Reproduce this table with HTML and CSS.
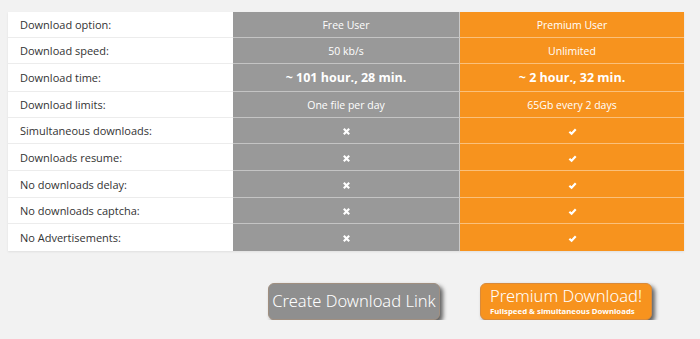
FILE: index.html
```html
<!DOCTYPE html>
<html lang="en">
<head>
    <meta charset="UTF-8">
    <meta name="viewport" content="width=device-width, initial-scale=1.0">
    <title>Download options</title>
    <link rel="stylesheet" href="styles.css">
</head>
<body>
    <div class="wrap">
        <table class="compare">
            <tr>
                <td class="label">Download option:</td>
                <td class="free">Free User</td>
                <td class="premium">Premium User</td>
            </tr>
            <tr>
                <td class="label">Download speed:</td>
                <td class="free">50 kb/s</td>
                <td class="premium">Unlimited</td>
            </tr>
            <tr class="big">
                <td class="label">Download time:</td>
                <td class="free">~ 101 hour., 28 min.</td>
                <td class="premium">~ 2 hour., 32 min.</td>
            </tr>
            <tr>
                <td class="label">Download limits:</td>
                <td class="free">One file per day</td>
                <td class="premium">65Gb every 2 days</td>
            </tr>
            <tr>
                <td class="label">Simultaneous downloads:</td>
                <td class="free"><svg class="icon" viewBox="0 0 10 10"><path d="M2 2 L8 8 M8 2 L2 8"/></svg></td>
                <td class="premium"><svg class="icon" viewBox="0 0 10 10"><path d="M1.5 5.2 L4 7.5 L8.6 2.5"/></svg></td>
            </tr>
            <tr class="tall">
                <td class="label">Downloads resume:</td>
                <td class="free"><svg class="icon" viewBox="0 0 10 10"><path d="M2 2 L8 8 M8 2 L2 8"/></svg></td>
                <td class="premium"><svg class="icon" viewBox="0 0 10 10"><path d="M1.5 5.2 L4 7.5 L8.6 2.5"/></svg></td>
            </tr>
            <tr class="tall">
                <td class="label">No downloads delay:</td>
                <td class="free"><svg class="icon" viewBox="0 0 10 10"><path d="M2 2 L8 8 M8 2 L2 8"/></svg></td>
                <td class="premium"><svg class="icon" viewBox="0 0 10 10"><path d="M1.5 5.2 L4 7.5 L8.6 2.5"/></svg></td>
            </tr>
            <tr>
                <td class="label">No downloads captcha:</td>
                <td class="free"><svg class="icon" viewBox="0 0 10 10"><path d="M2 2 L8 8 M8 2 L2 8"/></svg></td>
                <td class="premium"><svg class="icon" viewBox="0 0 10 10"><path d="M1.5 5.2 L4 7.5 L8.6 2.5"/></svg></td>
            </tr>
            <tr>
                <td class="label">No Advertisements:</td>
                <td class="free"><svg class="icon" viewBox="0 0 10 10"><path d="M2 2 L8 8 M8 2 L2 8"/></svg></td>
                <td class="premium"><svg class="icon" viewBox="0 0 10 10"><path d="M1.5 5.2 L4 7.5 L8.6 2.5"/></svg></td>
            </tr>
        </table>
        <div class="actions">
            <button class="btn btn-free">Create Download Link</button>
            <button class="btn btn-premium">
                <span class="title">Premium Download!</span>
                <span class="sub">Fullspeed &amp; simultaneous Downloads</span>
            </button>
        </div>
    </div>
</body>
</html>
```

FILE: styles.css
```css
body {
    margin: 0;
    background: #f2f2f2;
    font-family: "Open Sans", Arial, sans-serif;
}
.wrap {
    padding: 12px 16px 0 8px;
}
.compare {
    width: 676px;
    border-collapse: collapse;
    table-layout: fixed;
    box-shadow: 0 1px 2px rgba(0, 0, 0, 0.08);
}
.compare td {
    height: 25px;
    padding: 0;
    font-size: 10.5px;
    border-bottom: 1px solid #ececec;
}
.compare .tall td {
    height: 26px;
}
.compare .big td {
    height: 27px;
}
.compare tr:last-child td {
    border-bottom: none;
    height: 27px;
}
.compare .label {
    width: 213px;
    padding-left: 12px;
    background: #fff;
    color: #333;
    font-size: 11px;
}
.compare .free {
    width: 226px;
    background: #999;
    color: #fff;
    text-align: center;
    border-bottom-color: #c4c4c4;
    border-right: 1px solid #c9c9c9;
}
.compare .premium {
    background: #f7931e;
    color: #fff;
    text-align: center;
    border-bottom-color: #fbc07a;
}
.compare .big .free,
.compare .big .premium {
    font-size: 12.5px;
    font-weight: bold;
}
.icon {
    width: 9px;
    height: 9px;
    vertical-align: middle;
    fill: none;
    stroke: #fff;
    stroke-width: 2.4;
}
.actions {
    display: flex;
    gap: 40px;
    padding-left: 260px;
    margin-top: 32px;
}
.btn {
    width: 172px;
    height: 37px;
    border-radius: 6px;
    color: #fff;
    font-family: "Noto Sans", sans-serif;
    font-size: 16.5px;
    font-weight: 300;
    box-shadow: 3px 3px 4px rgba(0, 0, 0, 0.6);
    cursor: pointer;
    padding: 0;
    line-height: 1;
}
.btn-free {
    background: #8f8f8f;
    border: 1px solid #a08f80;
}
.btn-premium {
    background: #f7931e;
    border: 1px solid #d98a3a;
    display: flex;
    flex-direction: column;
    align-items: flex-start;
    justify-content: center;
    padding-left: 9px;
}
.btn-premium .title {
    display: block;
    line-height: 16px;
}
.btn-premium .sub {
    display: block;
    font-size: 7.8px;
    font-weight: bold;
    line-height: 10px;
    margin-top: 2px;
}
```
